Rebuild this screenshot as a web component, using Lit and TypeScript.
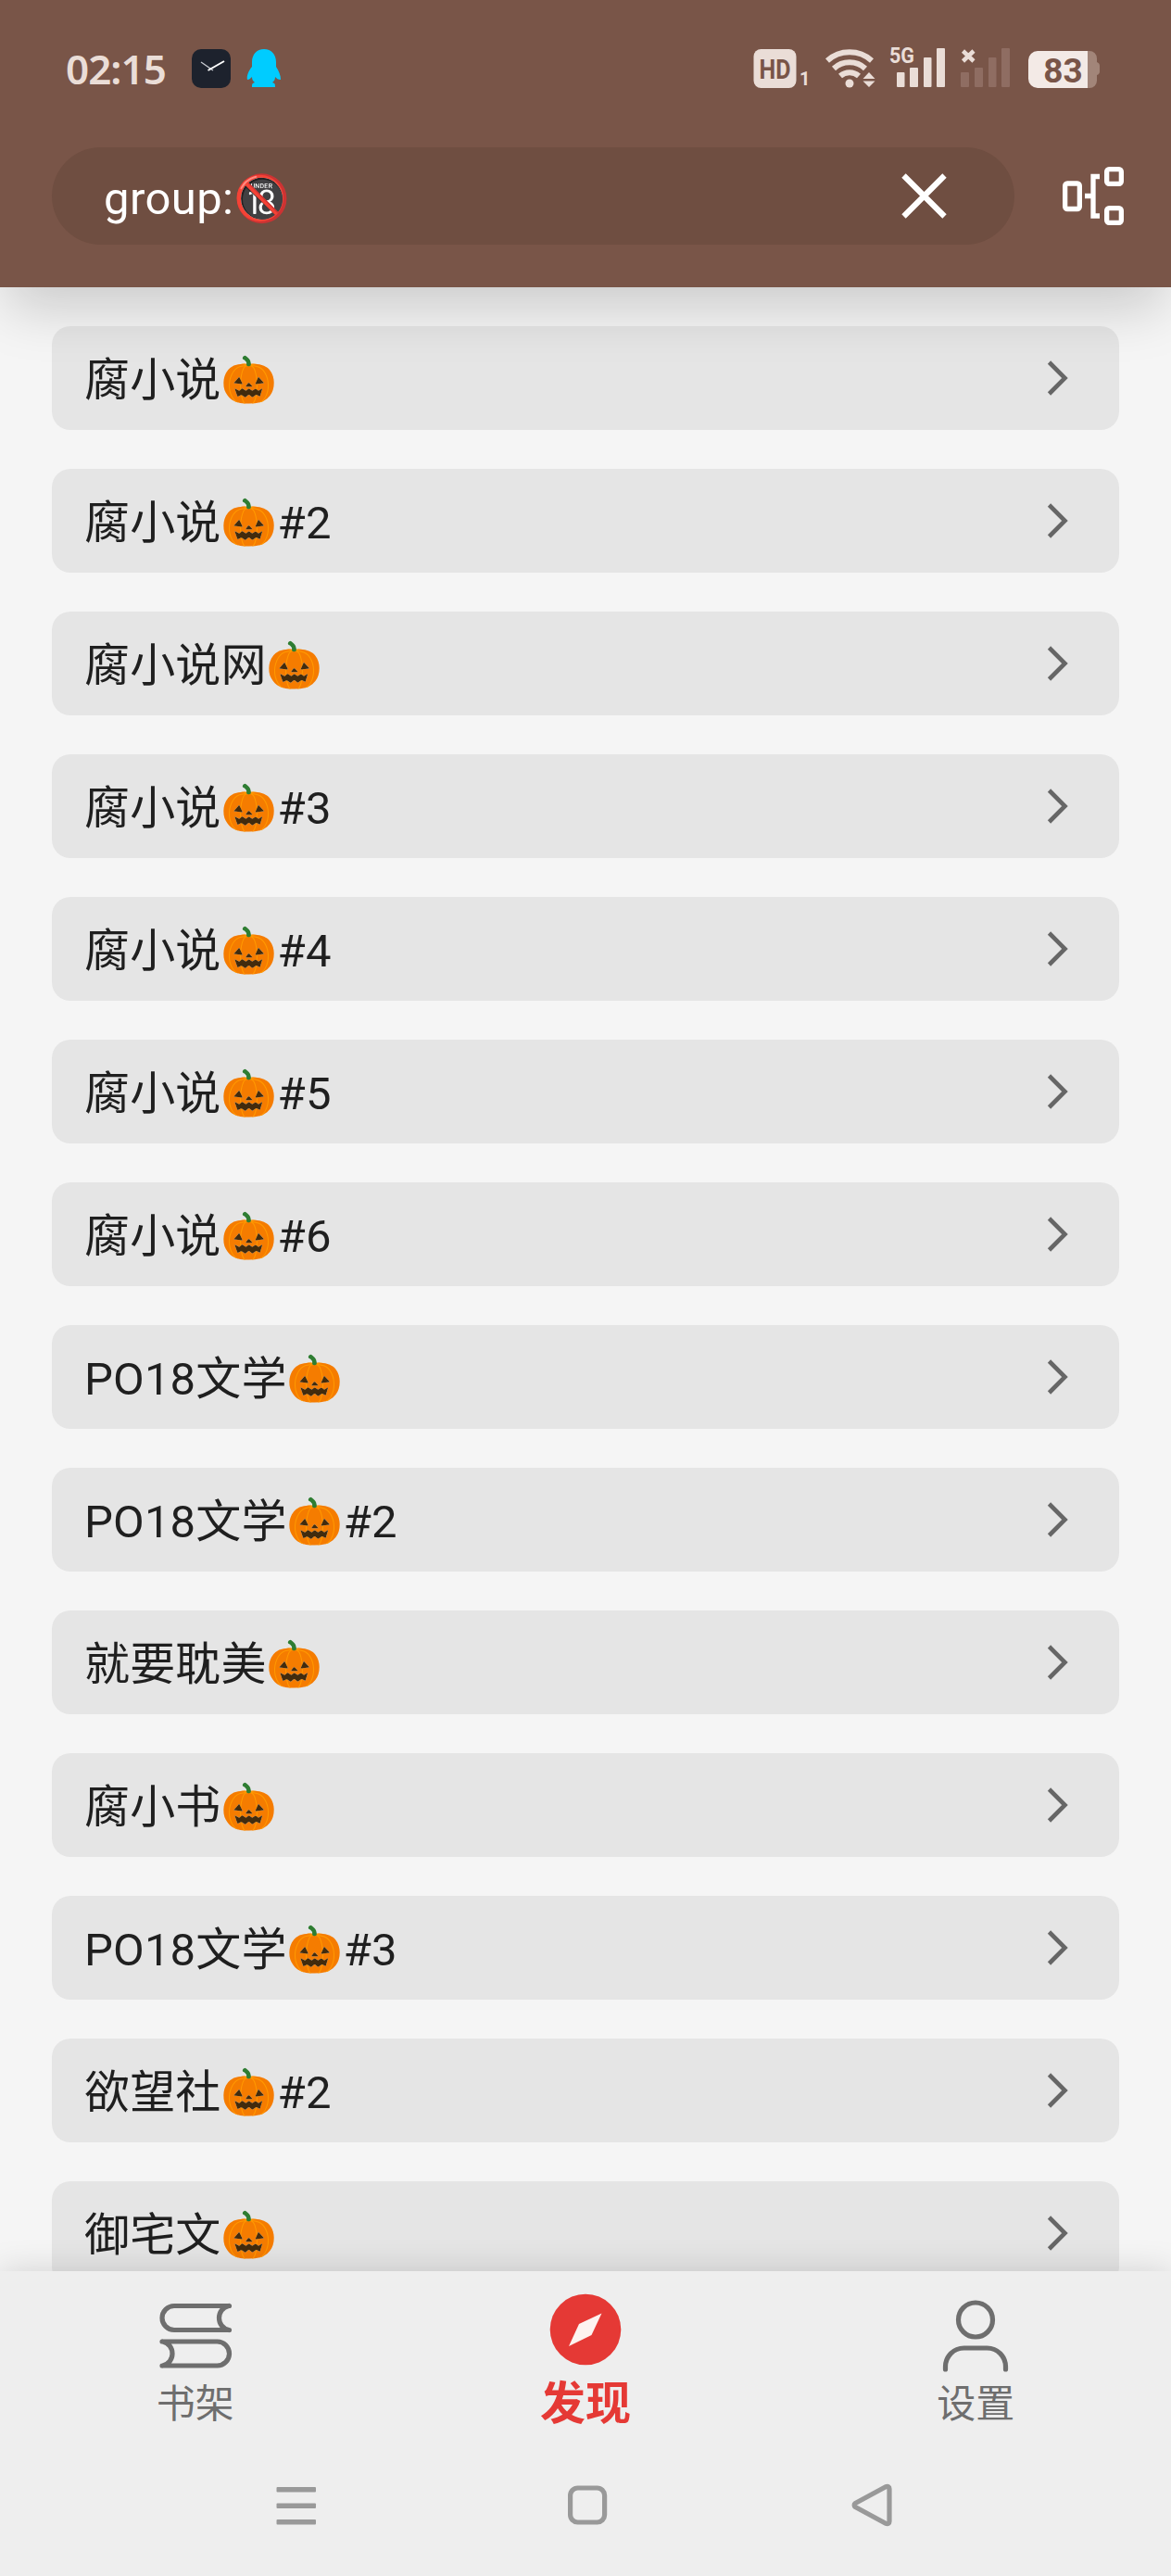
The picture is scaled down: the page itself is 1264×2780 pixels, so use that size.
import { css, html, LitElement, svg } from "lit";
import { customElement, property } from "lit/decorators.js";

@customElement("status-bar")
export class StatusBar extends LitElement {
    static styles = css`
    :host {
      display: flex;
      align-items: center;
      height: 78px;
      padding: 35px 77px 0 71px;
      color: #eaddd7;
      font-family: "Noto Sans", sans-serif;
    }

    svg {
      display: block;
      flex: none;
    }

    .time {
      width: 136px;
      font-size: 44px;
      font-weight: 600;
      line-height: 60px;
      letter-spacing: -1px;
    }

    .apps {
      display: flex;
      gap: 17px;
      flex: 1;
    }

    .label {
      font-family: Roboto, sans-serif;
      font-weight: 700;
    }
  `;

    render() {
        return html`
      <div class="time">02:15</div>
      <div class="apps">
        <svg width="42" height="42" viewBox="0 0 42 42">
          <rect width="42" height="42" rx="10" fill="#1d222d" />
          <path d="M10 14 23 23" stroke="#c9ccd2" stroke-width="1.3" />
          <path d="M17.5 23 35 13" stroke="#fff" stroke-width="2" />
        </svg>
        <svg width="38" height="42" viewBox="0 0 38 42">
          <path fill="#00ccff" d="M19 0C11 0 6 6 6 14v5C2 24 0 29 1 33c2 0 3-1 5-3 0 3 1 4 3 6-3 1-3 2-3 5h25c0-3 0-4-3-5 2-2 3-3 3-6 2 2 3 3 6 3 0-5-2-9-5-14v-5C32 6 27 0 19 0Z" />
        </svg>
      </div>
      <svg width="374" height="66" viewBox="813 41 374 66" fill="#eaddd7">
        <rect x="813.500" y="53" width="46" height="42" rx="8" />
        <text class="label" x="836.500" y="84.500" font-size="29" text-anchor="middle" textLength="34" lengthAdjust="spacingAndGlyphs" fill="#795548">HD</text>
        <text class="label" x="863" y="92" font-size="20">1</text>
        <g fill="none" stroke="#eaddd7" stroke-width="6">
          <path d="M893 65.500a36 36 0 0 1 48 0" />
          <path d="M900 74a25 25 0 0 1 34 0" />
          <path d="M907 82a15 15 0 0 1 20 0" />
        </g>
        <circle cx="917" cy="90" r="4.500" />
        <path d="M938 74 948 83.500 938 97 928 83.500Z" fill="#795548" />
        <path d="m938 78 6.500 7h-13ZM938 94l-6.500-6.500h13Z" />
        <text class="label" x="960" y="68" font-size="23" textLength="27" lengthAdjust="spacingAndGlyphs">5G</text>
        <rect x="968" y="78" width="8.500" height="16" rx="1" />
        <rect x="982" y="73" width="9" height="21" rx="1" />
        <rect x="997" y="62" width="8.500" height="32" rx="1" />
        <rect x="1011" y="52" width="9" height="42" rx="1" />
        <path d="m1039.500 55 11.500 11m0-11-11.500 11" fill="none" stroke="#eaddd7" stroke-width="4.500" />
        <g fill="#8f6d62">
          <rect x="1037" y="78" width="9" height="16" rx="1" />
          <rect x="1052" y="73" width="9" height="21" rx="1" />
          <rect x="1067" y="62" width="8.500" height="32" rx="1" />
          <rect x="1081" y="52" width="9" height="42" rx="1" />
        </g>
        <path d="M1174 55h2a8 8 0 0 1 8 8v4q3 1 3 4v6q0 3-3 4v6a8 8 0 0 1-8 8h-2Z" fill="#a28579" />
        <path d="M1174 55h-54a10 10 0 0 0-10 10v20a10 10 0 0 0 10 10h54Z" fill="#f3eae6" />
        <text class="label" x="1147.500" y="89" font-size="37" text-anchor="middle" fill="#795548">83</text>
      </svg>
    `;
    }
}

@customElement("search-bar")
export class SearchBar extends LitElement {
    @property() query = "";

    static styles = css`
    :host {
      display: flex;
      align-items: center;
      justify-content: space-between;
      height: 197px;
      padding: 0 51px 0 56px;
    }

    .field {
      display: flex;
      align-items: center;
      justify-content: space-between;
      box-sizing: border-box;
      width: 1039px;
      height: 105px;
      padding: 0 73px 0 56px;
      border-radius: 53px;
      background: #6f4e41;
      color: #fff;
      font: 49px/58px Roboto, "Noto Sans CJK SC", "Noto Color Emoji", sans-serif;
      letter-spacing: 0.4px;
    }

    .query {
      padding-top: 7px;
    }

    svg {
      display: block;
    }
  `;

    render() {
        return html`
      <div class="field">
        <span class="query">${this.query}</span>
        <svg width="49" height="49" viewBox="0 0 49 49" stroke="#fff" stroke-width="6.200">
          <path d="M2.500 2.500 46.500 46.500M46.500 2.500 2.500 46.500" />
        </svg>
      </div>
      <svg width="66" height="63" viewBox="0 0 66 63" fill="none" stroke="#fff" stroke-width="5.300">
        <rect x="2.650" y="18" width="15.700" height="27.500" rx="2.500" />
        <rect x="47.650" y="2.650" width="15.700" height="15.700" rx="2.500" />
        <rect x="47.650" y="44.650" width="15.700" height="15.700" rx="2.500" />
        <path d="M40 10.500h-7v42.500h7M33 31.500h-9" />
      </svg>
    `;
    }
}

@customElement("source-list")
export class SourceList extends LitElement {
    @property({ type: Array }) items: string[] = [];

    static styles = css`
    :host {
      display: flex;
      flex-direction: column;
      gap: 42px;
      padding: 42px 56px 0;
    }

    .card {
      display: flex;
      align-items: center;
      justify-content: space-between;
      flex: none;
      box-sizing: border-box;
      height: 112px;
      padding: 0 55px 0 35px;
      border-radius: 20px;
      background: #e5e5e5;
      color: #1f1f1f;
      font: 49px/58px Roboto, "Noto Sans CJK SC", "Noto Color Emoji", sans-serif;
      letter-spacing: 0.15px;
    }

    .name {
      padding-top: 6px;
      white-space: nowrap;
    }
  `;

    render() {
        return this.items.map(
            (item) => html`
        <div class="card">
          <span class="name">${item}</span>
          <svg width="24" height="40" viewBox="0 0 24 40" fill="none" stroke="#666" stroke-width="4.600">
            <path d="M3.500 3 20.500 20 3.500 37" />
          </svg>
        </div>
      `
        );
    }
}

@customElement("tab-bar")
export class TabBar extends LitElement {
    @property() active = "发现";

    static styles = css`
    :host {
      display: grid;
      grid-template-columns: repeat(3, 1fr);
      height: 155px;
      padding-top: 20px;
    }

    .tab {
      display: flex;
      flex-direction: column;
      align-items: center;
      color: #6e6e6e;
      font: 42px/60px Roboto, "Noto Sans CJK SC", sans-serif;
    }

    .tab.active {
      color: #e53935;
      font-size: 49px;
      font-weight: 700;
    }

    .label {
      padding-top: 3px;
    }
  `;

    private tabs = [
        {
            label: "书架",
            icon: svg`
        <path d="M84.500 17.500H25a13 13 0 0 0 0 26h59.500M84 17.500c-14 3-14 23 0 26M12 56h59.500a13 13 0 0 1 0 26H12M12.500 56c14 3 14 23 0 26" />`,
        },
        {
            label: "发现",
            icon: svg`
        <circle cx="48" cy="43" r="38.300" fill="#e53935" stroke="none" />
        <path d="M65.500 25.500 54.500 49 30 61 41 37Z" fill="#fdf3f0" stroke="none" />`,
        },
        {
            label: "设置",
            icon: svg`
        <circle cx="48" cy="32.500" r="18.500" />
        <path d="M15.500 86v-3a20 20 0 0 1 20-20h25a20 20 0 0 1 20 20v3" />`,
        },
    ];

    render() {
        return this.tabs.map(
            (tab) => html`
        <div class="tab ${tab.label === this.active ? "active" : ""}">
          <svg width="96" height="91" viewBox="0 0 96 91" fill="none" stroke="#6e6e6e" stroke-width="5.200" stroke-linecap="round">
            ${tab.icon}
          </svg>
          <span class="label">${tab.label}</span>
        </div>
      `
        );
    }
}

@customElement("system-nav")
export class SystemNav extends LitElement {
    static styles = css`
    :host {
      display: flex;
      align-items: center;
      justify-content: space-between;
      height: 155px;
      padding: 0 299px 0 296px;
    }

    .home {
      margin-left: 6px;
    }
  `;

    render() {
        return html`
      <svg width="48" height="48" viewBox="0 0 48 48" fill="#999">
        <rect x="2.500" y="4" width="42.500" height="5.500" rx="1" />
        <rect x="2.500" y="21.500" width="42.500" height="5.500" rx="1" />
        <rect x="2.500" y="39" width="42.500" height="5.500" rx="1" />
      </svg>
      <svg class="home" width="48" height="48" viewBox="0 0 48 48" fill="none" stroke="#999" stroke-width="5.200">
        <rect x="5.600" y="5" width="37" height="37" rx="8" />
      </svg>
      <svg width="48" height="48" viewBox="0 0 48 48" fill="none" stroke="#999" stroke-width="5.200" stroke-linejoin="round">
        <path d="M6.200 21.500Q4 23.500 6.200 25.500L39 43.300Q43 44.500 43 41V6Q43 2.500 39 3.700Z" />
      </svg>
    `;
    }
}

@customElement("app-root")
export class AppRoot extends LitElement {
    private sources = [
        "腐小说🎃",
        "腐小说🎃#2",
        "腐小说网🎃",
        "腐小说🎃#3",
        "腐小说🎃#4",
        "腐小说🎃#5",
        "腐小说🎃#6",
        "PO18文学🎃",
        "PO18文学🎃#2",
        "就要耽美🎃",
        "腐小书🎃",
        "PO18文学🎃#3",
        "欲望社🎃#2",
        "御宅文🎃",
    ];

    static styles = css`
    :host {
      display: flex;
      flex-direction: column;
      width: 1264px;
      height: 2780px;
      overflow: hidden;
      background: #f5f5f5;
    }

    header {
      z-index: 1;
      flex: none;
      height: 310px;
      background: #795548;
      box-shadow: 0 30px 56px -8px rgba(0, 0, 0, 0.175);
    }

    main {
      flex: 1;
      min-height: 0;
      overflow: hidden;
    }

    footer {
      z-index: 1;
      flex: none;
      height: 329px;
      background: #eee;
      box-shadow: 0 2px 36px rgba(0, 0, 0, 0.16);
    }
  `;

    render() {
        return html`
      <header>
        <status-bar></status-bar>
        <search-bar .query=${"group:🔞"}></search-bar>
      </header>
      <main>
        <source-list .items=${this.sources}></source-list>
      </main>
      <footer>
        <tab-bar></tab-bar>
        <system-nav></system-nav>
      </footer>
    `;
    }
}
